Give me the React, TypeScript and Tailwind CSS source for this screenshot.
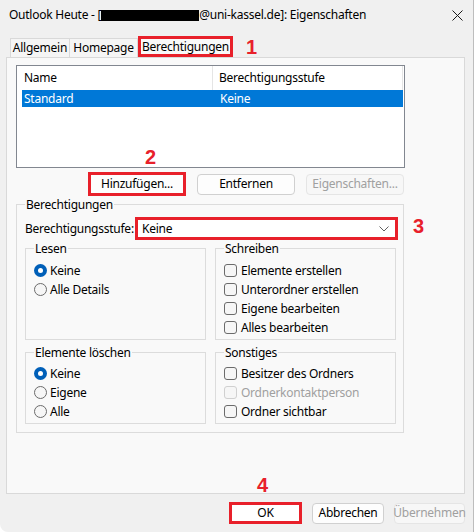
import React from "react"

const RED = "border-[#e8202a]"

// annotation number drawn over the screenshot
const Mark = ({ n, className }: { n: string; className: string }) => (
  <span className={`absolute text-[20px] leading-none font-bold tracking-normal text-[#e8202a] font-['Liberation_Sans',sans-serif] ${className}`}>
    {n}
  </span>
)

const Radio = ({ checked, label }: { checked?: boolean; label: string }) => (
  <div className="flex items-center h-[19px]">
    {checked ? (
      <span className="w-[13px] h-[13px] rounded-full bg-[#005fb8] flex items-center justify-center">
        <span className="w-[5px] h-[5px] rounded-full bg-white" />
      </span>
    ) : (
      <span className="w-[13px] h-[13px] rounded-full border border-[#6b6b6b] bg-[#f6f6f6]" />
    )}
    <span className="ml-[3px]">{label}</span>
  </div>
)

const Check = ({ label, disabled }: { label: string; disabled?: boolean }) => (
  <div className="flex items-center h-[19px]">
    <span
      className={`w-[13px] h-[13px] rounded-[3px] border bg-[#f6f6f6] ${disabled ? "border-[#d0d0d0]" : "border-[#6b6b6b]"}`}
    />
    <span className={`ml-[4px] ${disabled ? "text-[#a0a0a0]" : ""}`}>{label}</span>
  </div>
)

const Group = ({ title, className, children }: { title: string; className?: string; children: React.ReactNode }) => (
  <div className={`relative border border-[#dcdcdc] ${className ?? ""}`}>
    <span className="absolute left-[8px] top-[-8px] px-[1px] bg-[#f9f9f9] leading-[15px]">{title}</span>
    {children}
  </div>
)

const Button = ({ children, disabled, className }: { children: React.ReactNode; disabled?: boolean; className?: string }) => (
  <button
    className={`flex items-center justify-center rounded-[4px] border ${
      disabled ? "border-[#e5e5e5] bg-[#f7f7f7] text-[#a0a0a0]" : "border-[#d0d0d0] bg-[#fdfdfd] text-black"
    } ${className ?? ""}`}
  >
    {children}
  </button>
)

export default function App() {
  return (
    <div className="relative w-[474px] h-[532px] overflow-hidden bg-[#f0f0f0] border-r border-[#bdbdbd] rounded-bl-[8px] text-[12px] leading-none tracking-[-0.25px] text-black whitespace-nowrap font-['Noto_Sans',sans-serif]">
      {/* Title bar */}
      <div className="flex items-center h-[30px] pl-[9px] pr-[10px]">
        <span>Outlook Heute - [</span>
        <span className="w-[98px] h-[11px] bg-black" />
        <span>@uni-kassel.de]: Eigenschaften</span>
        <svg className="ml-auto" width="11" height="11" viewBox="0 0 11 11" fill="none">
          <path d="M0.5 0.5L10.5 10.5M10.5 0.5L0.5 10.5" stroke="#1a1a1a" strokeWidth="1" />
        </svg>
      </div>

      {/* Tabs */}
      <div className="flex items-end h-[21px] mt-[6px] ml-[10px]">
        <div className="flex items-center justify-center w-[60px] h-[19px] border border-b-0 border-[#d9d9d9] bg-[#f5f5f5]">
          Allgemein
        </div>
        <div className="flex items-center justify-center w-[68px] h-[19px] border border-l-0 border-b-0 border-[#d9d9d9] bg-[#f5f5f5]">
          Homepage
        </div>
        <div className={`flex items-center justify-center w-[95px] h-[21px] border-[3px] ${RED} bg-[#f9f9f9]`}>
          Berechtigungen
        </div>
      </div>

      {/* Tab panel */}
      <div className="ml-[6px] w-[459px] h-[437px] border border-[#d9d9d9] bg-[#f9f9f9]">
        {/* List view */}
        <div className="mt-[7px] ml-[9px] w-[389px] h-[103px] border border-[#828790] bg-white">
          <div className="flex h-[24px] items-center">
            <div className="w-[196px] h-full flex items-center pl-[7px] border-r border-[#e5e5e5]">Name</div>
            <div className="w-[190px] h-full flex items-center pl-[6px] border-r border-[#e5e5e5]">Berechtigungsstufe</div>
          </div>
          <div className="flex h-[17px] items-center ml-[5px] w-[381px] bg-[#0078d7] text-white">
            <div className="w-[193px] pl-[2px]">Standard</div>
            <div className="pl-[5px]">Keine</div>
          </div>
        </div>

        {/* List buttons */}
        <div className="flex items-center h-[24px] mt-[4px] pl-[81px] gap-[11px]">
          <button className={`flex items-center justify-center w-[98px] h-[24px] border-[3px] ${RED} bg-[#fdfdfd]`}>
            Hinzufügen...
          </button>
          <Button className="w-[98px] h-[21px]">Entfernen</Button>
          <Button disabled className="w-[98px] h-[21px]">
            Eigenschaften...
          </Button>
        </div>

        {/* Berechtigungen group */}
        <Group title="Berechtigungen" className="mt-[8px] ml-[9px] w-[388px] h-[229px]">
          <div className="flex items-center mt-[12px] pl-[8px]">
            <span className="w-[110px]">Berechtigungsstufe:</span>
            <div className={`flex items-center w-[263px] h-[23px] border-[3px] ${RED} bg-white pl-[4px] pr-[6px]`}>
              <span>Keine</span>
              <svg className="ml-auto" width="10" height="6" viewBox="0 0 10 6" fill="none">
                <path d="M0.5 0.5L5 5L9.5 0.5" stroke="#606060" strokeWidth="1" />
              </svg>
            </div>
          </div>

          <div className="grid grid-cols-[181px_181px] grid-rows-[92px_72px] gap-x-[9px] gap-y-[12px] mt-[8px] pl-[8px]">
            <Group title="Lesen" className="pt-[12px] pl-[8px]">
              <Radio checked label="Keine" />
              <Radio label="Alle Details" />
            </Group>
            <Group title="Schreiben" className="pt-[12px] pl-[8px]">
              <Check label="Elemente erstellen" />
              <Check label="Unterordner erstellen" />
              <Check label="Eigene bearbeiten" />
              <Check label="Alles bearbeiten" />
            </Group>
            <Group title="Elemente löschen" className="pt-[11px] pl-[8px]">
              <Radio checked label="Keine" />
              <Radio label="Eigene" />
              <Radio label="Alle" />
            </Group>
            <Group title="Sonstiges" className="pt-[11px] pl-[8px]">
              <Check label="Besitzer des Ordners" />
              <Check disabled label="Ordnerkontaktperson" />
              <Check label="Ordner sichtbar" />
            </Group>
          </div>
        </Group>
      </div>

      {/* Dialog buttons */}
      <div className="flex items-center justify-end h-[22px] mt-[8px] pr-[8px] gap-[10px]">
        <button className={`flex items-center justify-center w-[73px] h-[22px] border-[3px] ${RED} bg-white`}>OK</button>
        <Button className="w-[72px] h-[21px]">Abbrechen</Button>
        <Button disabled className="w-[71px] h-[21px]">
          Übernehmen
        </Button>
      </div>

      <Mark n="1" className="left-[246px] top-[37px]" />
      <Mark n="2" className="left-[145px] top-[147px]" />
      <Mark n="3" className="left-[413px] top-[216px]" />
      <Mark n="4" className="left-[257px] top-[475px]" />
    </div>
  )
}
